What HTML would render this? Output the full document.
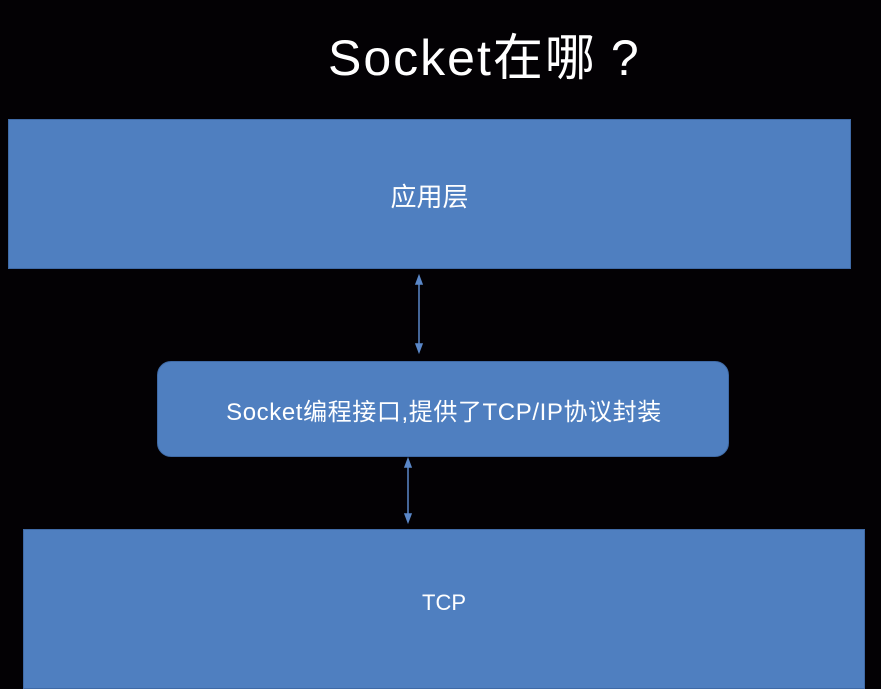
<!DOCTYPE html>
<html><head><meta charset="utf-8"><style>
body{margin:0;width:881px;height:674px;background:#030104;position:relative;overflow:hidden;font-family:"Liberation Sans","Noto Sans CJK SC",sans-serif;color:#fff}
.b{position:absolute;background:#4f7fc0;border:1px solid #3f6aa6;box-sizing:border-box;display:flex;align-items:center;justify-content:center;font-size:21px}
h1{position:absolute;left:328px;top:26px;margin:0;font-family:"Liberation Sans","Noto Sans CJK SC",sans-serif;font-weight:normal;font-size:50px;letter-spacing:2px;line-height:64px}
</style></head><body>
<h1>Socket在哪<span style="margin-left:14px">?</span></h1>
<div class="b" style="left:8px;top:119px;width:843px;height:150px;font-size:26px;padding-top:2px">应用层</div>
<div class="b" style="left:157px;top:361px;width:572px;height:96px;border-radius:14px;font-size:24px;letter-spacing:0.6px;padding-left:2px">Socket编程接口,提供了TCP/IP协议封装</div>
<div class="b" style="left:23px;top:529px;width:842px;height:160px;padding-bottom:12px;font-size:22px">TCP</div>
<svg width="881" height="674" style="position:absolute;left:0;top:0">
<g stroke="#5a87c8" stroke-width="1.5" fill="#5a87c8">
<line x1="419" y1="280" x2="419" y2="348"/><path d="M416 284 L419 276 L422 284Z M416 344 L419 352 L422 344Z"/>
<line x1="408" y1="463" x2="408" y2="518"/><path d="M405 467 L408 459 L411 467Z M405 514 L408 522 L411 514Z"/>
</g></svg>
</body></html>
